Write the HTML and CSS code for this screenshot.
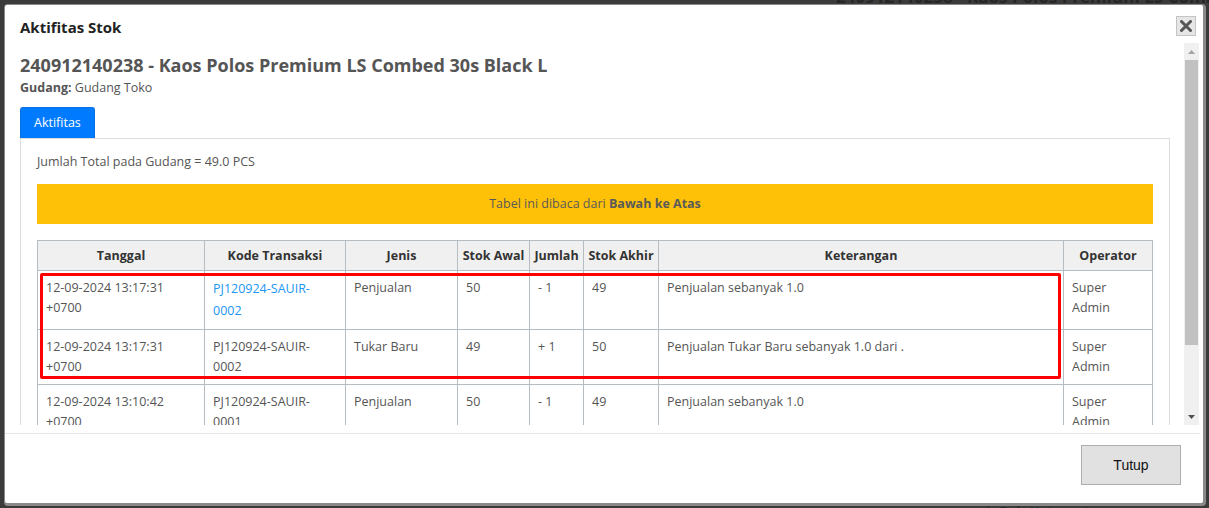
FILE: index.html
```html
<!DOCTYPE html>
<html lang="id">
<head>
  <meta charset="UTF-8">
  <meta name="viewport" content="width=device-width, initial-scale=1.0">
  <title>Aktifitas Stok</title>
  <link rel="stylesheet" href="styles.css">
</head>
<body>
  <div class="page">
    <div class="page-top">
      <h2 class="page-title">240912140238 - Kaos Polos Premium LS Combed 30s</h2>
      <div class="page-badge"></div>
    </div>
    <div class="page-label">Sub Kategori :</div>
  </div>

  <div class="modal">
    <div class="modal-header">
      <h4>Aktifitas Stok</h4>
      <button class="close" title="Tutup">
        <svg width="12" height="12" viewBox="0 0 12 12">
          <path d="M1.5 1.5 L10.5 10.5 M10.5 1.5 L1.5 10.5" stroke="#555" stroke-width="3" stroke-linecap="round"/>
        </svg>
      </button>
    </div>

    <div class="modal-main">
      <div class="modal-body">
        <h3 class="product">240912140238 - Kaos Polos Premium LS Combed 30s Black L</h3>
        <div class="warehouse"><b>Gudang:</b> Gudang Toko</div>

        <ul class="tabs">
          <li class="active">Aktifitas</li>
        </ul>

        <div class="tab-pane">
          <p class="total">Jumlah Total pada Gudang = 49.0 PCS</p>
          <div class="notice">Tabel ini dibaca dari <b>Bawah ke Atas</b></div>

          <div class="table-wrap">
            <table class="stock">
              <thead>
                <tr>
                  <th class="c-date">Tanggal</th>
                  <th class="c-code">Kode Transaksi</th>
                  <th class="c-type">Jenis</th>
                  <th class="c-start">Stok Awal</th>
                  <th class="c-qty">Jumlah</th>
                  <th class="c-end">Stok Akhir</th>
                  <th>Keterangan</th>
                  <th class="c-op">Operator</th>
                </tr>
              </thead>
              <tbody>
                <tr>
                  <td>12-09-2024 13:17:31 +0700</td>
                  <td><a href="#" class="trx">PJ120924-SAUIR-0002</a></td>
                  <td>Penjualan</td>
                  <td>50</td>
                  <td>- 1</td>
                  <td>49</td>
                  <td>Penjualan sebanyak 1.0</td>
                  <td>Super Admin</td>
                </tr>
                <tr>
                  <td>12-09-2024 13:17:31 +0700</td>
                  <td>PJ120924-SAUIR-0002</td>
                  <td>Tukar Baru</td>
                  <td>49</td>
                  <td>+ 1</td>
                  <td>50</td>
                  <td>Penjualan Tukar Baru sebanyak 1.0 dari .</td>
                  <td>Super Admin</td>
                </tr>
                <tr>
                  <td>12-09-2024 13:10:42 +0700</td>
                  <td>PJ120924-SAUIR-0001</td>
                  <td>Penjualan</td>
                  <td>50</td>
                  <td>- 1</td>
                  <td>49</td>
                  <td>Penjualan sebanyak 1.0</td>
                  <td>Super Admin</td>
                </tr>
              </tbody>
            </table>
            <div class="highlight"></div>
          </div>
        </div>
      </div>

      <div class="scrollbar">
        <div class="sb-btn">
          <svg width="7" height="4" viewBox="0 0 7 4"><path d="M0 4 L3.5 0 L7 4 Z" fill="#a3a3a3"/></svg>
        </div>
        <div class="sb-track">
          <div class="sb-thumb"></div>
        </div>
        <div class="sb-btn">
          <svg width="7" height="4" viewBox="0 0 7 4"><path d="M0 0 L7 0 L3.5 4 Z" fill="#505050"/></svg>
        </div>
      </div>
    </div>

    <div class="modal-footer">
      <button class="btn">Tutup</button>
    </div>
  </div>
</body>
</html>
```

FILE: styles.css
```css
body {
  margin: 0;
  height: 508px;
  overflow: hidden;
  background-color: #3b3b3b;
  font-family: "Open Sans", "DejaVu Sans", sans-serif;
  font-size: 12.5px;
  color: #555;
}

/* dimmed page behind the modal */
.page {
  height: 508px;
  display: flex;
  flex-direction: column;
  justify-content: space-between;
  padding-left: 836px;
  color: #262626;
}

.page-top {
  display: flex;
  align-items: flex-start;
}

.page-title {
  margin: -14px 0 0;
  font-size: 17px;
  line-height: 22px;
  font-weight: bold;
  white-space: nowrap;
}

.page-badge {
  width: 64px;
  height: 6px;
  margin-left: 22px;
  background-color: #3d3a24;
}

.page-label {
  margin: 0 0 -12px 152px;
  padding-left: 10px;
  border-left: 1px solid #262626;
  font-size: 15px;
  line-height: 18px;
}

/* modal */
.modal {
  position: absolute;
  top: 5px;
  left: 5px;
  width: 1198px;
  height: 498px;
  display: flex;
  flex-direction: column;
  background: #fff;
  border-radius: 2px;
  box-shadow: 1px 1px 0 2px #8a8a8a;
}

.modal-header {
  display: flex;
  justify-content: space-between;
  align-items: flex-start;
  padding: 12px 7px 5px 15px;
}

.modal-header h4 {
  margin: 0;
  font-size: 15px;
  line-height: 20px;
  font-weight: bold;
  color: #222;
}

.close {
  width: 20px;
  height: 20px;
  margin-top: -1px;
  padding: 0;
  display: flex;
  align-items: center;
  justify-content: center;
  border: 1px solid #c4c4c4;
  background: #e6e6e6;
  cursor: pointer;
}

.modal-main {
  display: flex;
  height: 383px;
  flex: none;
  margin-right: 4px;
}

.modal-body {
  flex: 1;
  min-width: 0;
  overflow: hidden;
  padding: 12px 14px 0 15px;
}

/* scrollbar of the body, scrolled to the top */
.scrollbar {
  width: 15px;
  margin-top: 1px;
  display: flex;
  flex-direction: column;
  background: #f0f0f0;
}

.sb-btn {
  height: 17px;
  display: flex;
  align-items: center;
  justify-content: center;
}

.sb-track {
  flex: 1;
}

.sb-thumb {
  height: 285px;
  margin: 0 1px;
  background: #c1c1c1;
}

.product {
  margin: 0;
  font-size: 18px;
  line-height: 22px;
  font-weight: bold;
  color: #555;
}

.warehouse {
  margin-top: 2px;
  line-height: 20px;
}

.tabs {
  list-style: none;
  margin: 9px 0 0;
  padding: 0;
  display: flex;
}

.tabs li {
  height: 30px;
  line-height: 29px;
  padding: 0 13px;
  font-size: 12.5px;
  border: 1px solid #0a6fe0;
  border-bottom: none;
  border-radius: 3px 3px 0 0;
}

.tabs li.active {
  background-color: #007bff;
  color: #fff;
}

.tab-pane {
  border: 1px solid #ddd;
  padding: 13px 16px 15px;
}

.total {
  margin: 0;
  line-height: 20px;
}

.notice {
  margin-top: 12px;
  padding: 11px;
  line-height: 18px;
  text-align: center;
  background-color: #ffc107;
  color: #5a5a5a;
}

.table-wrap {
  position: relative;
  margin-top: 16px;
}

.stock {
  width: 100%;
  border-collapse: collapse;
  table-layout: fixed;
}

.stock th {
  box-sizing: border-box;
  padding: 6px 4px;
  line-height: 17px;
  font-weight: bold;
  color: #333;
  background-color: #f0f0f0;
  border: 1px solid #b5bcc2;
  text-align: center;
  white-space: nowrap;
}

.stock td {
  padding: 7px 8px;
  line-height: 20px;
  vertical-align: top;
  border: 1px solid #b5bcc2;
}

.c-date { width: 167px; }
.c-code { width: 141px; }
.c-type { width: 112px; }
.c-start { width: 72px; }
.c-qty { width: 54px; }
.c-end { width: 75px; }
.c-op { width: 89px; }

.trx {
  color: #2196f3;
  text-decoration: none;
  line-height: 22px;
}

/* red annotation box over the two linked rows */
.highlight {
  position: absolute;
  left: 3px;
  top: 33px;
  width: 1015px;
  height: 100px;
  border: 3px solid #ff0000;
  border-radius: 2px;
  pointer-events: none;
}

.modal-footer {
  margin: 8px 3px 0 0;
  border-top: 1px solid #e5e5e5;
  padding: 11px 19px 0 0;
  display: flex;
  justify-content: flex-end;
}

.btn {
  width: 100px;
  height: 40px;
  font-family: "Liberation Sans", Arial, sans-serif;
  font-size: 14px;
  color: #111;
  background-color: #e1e1e1;
  border: 1px solid #adadad;
  cursor: pointer;
}

.btn:hover {
  background-color: #e5f1fb;
}
```
